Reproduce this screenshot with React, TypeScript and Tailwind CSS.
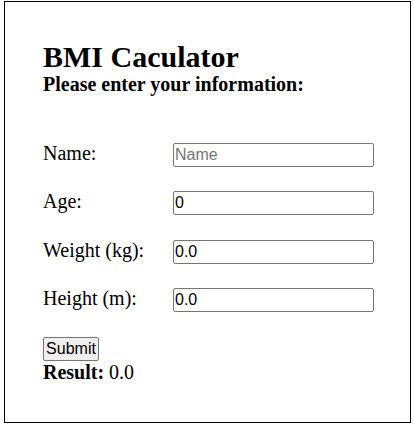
const rows = [
  { label: 'Name:', value: '', placeholder: 'Name' },
  { label: 'Age:', value: '0', placeholder: '' },
  { label: 'Weight (kg):', value: '0.0', placeholder: '' },
  { label: 'Height (m):', value: '0.0', placeholder: '' },
];

const App = () => {
  return (
    <div className="bg-white w-[414px] h-[424px] pt-[1px] pl-[4px] text-black">
      <div className="w-[407px] h-[422px] border border-black pl-[38px] pt-[38px] font-['Liberation_Serif',serif]">
        <h1 className="text-[30px] font-bold leading-[33px]">BMI Caculator</h1>
        <h4 className="text-[20px] font-bold leading-[23px]">Please enter your information:</h4>

        <div className="mt-[47px] flex flex-col gap-[24.4px]">
          {rows.map((row) => (
            <div key={row.label} className="flex items-start h-[24px]">
              <label className="w-[130px] text-[20px] leading-[20px]">{row.label}</label>
              <input
                type="text"
                defaultValue={row.value}
                placeholder={row.placeholder}
                className="w-[201px] h-[24px] border border-[#767676] rounded-[2px] px-[1px] bg-white text-[16px] font-['Liberation_Sans',Arial,sans-serif] text-black placeholder:text-[#757575] outline-none"
              />
            </div>
          ))}
        </div>

        <div className="mt-[25px] flex flex-col items-start">
          <button className="h-[24px] w-[56px] border border-[#767676] rounded-[2px] bg-[#efefef] text-[16px] font-['Liberation_Sans',Arial,sans-serif] leading-none">
            Submit
          </button>
          <p className="text-[20px] leading-[22px]">
            <b>Result:</b> 0.0
          </p>
        </div>
      </div>
    </div>
  );
};

export default App;
